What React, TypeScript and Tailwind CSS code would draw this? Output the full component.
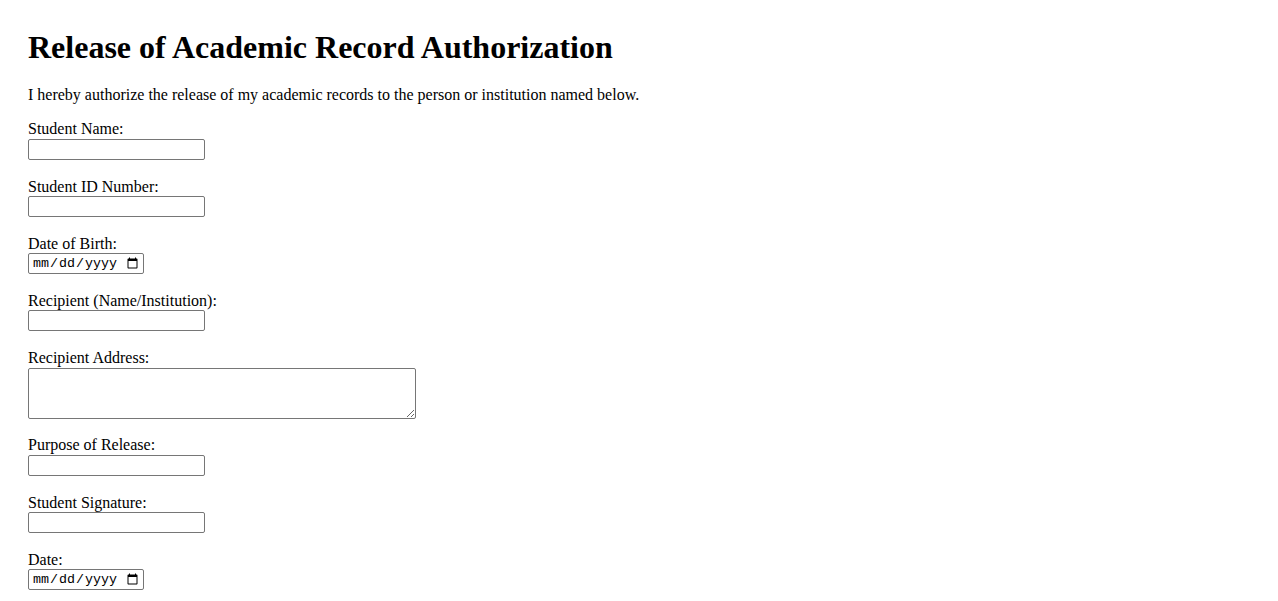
import React from "react";

type FieldProps = {
  label: string;
  id: string;
  kind?: "text" | "date" | "area";
};

function Field({ label, id, kind = "text" }: FieldProps) {
  return (
    <div className="flex flex-col items-start mb-[17.8px]">
      <label htmlFor={id} className="block leading-[18.4px]">
        {label}
      </label>
      {kind === "area" ? (
        <textarea
          id={id}
          className="w-[388px] h-[51px] border border-[#767676] rounded-[2px] bg-white px-[2px] py-[2px] text-[13px] font-['Liberation_Mono',monospace]"
        />
      ) : kind === "date" ? (
        <input
          id={id}
          type="date"
          className="w-[116px] h-[21px] border border-[#767676] rounded-[2px] bg-white pl-[3px] pr-[2px] text-[13.33px] text-black font-['Liberation_Mono',monospace]"
        />
      ) : (
        <input
          id={id}
          type="text"
          className="w-[177px] h-[21px] border border-[#767676] rounded-[2px] bg-white px-[2px] text-[13.33px] font-['Liberation_Sans',sans-serif]"
        />
      )}
    </div>
  );
}

export default function App() {
  return (
    <div className="min-h-screen bg-white text-black font-['Liberation_Serif',serif] text-[16px] px-[28px] pt-[29px]">
      <h1 className="text-[32px] font-bold leading-[37px]">
        Release of Academic Record Authorization
      </h1>
      <p className="mt-[20px] mb-[16px] leading-[18.4px]">
        I hereby authorize the release of my academic records to the person or
        institution named below.
      </p>
      <form>
        <Field label="Student Name:" id="name" />
        <Field label="Student ID Number:" id="sid" />
        <Field label="Date of Birth:" id="dob" kind="date" />
        <Field label="Recipient (Name/Institution):" id="recipient" />
        <Field label="Recipient Address:" id="address" kind="area" />
        <Field label="Purpose of Release:" id="purpose" />
        <Field label="Student Signature:" id="signature" />
        <Field label="Date:" id="date" kind="date" />
      </form>
    </div>
  );
}
